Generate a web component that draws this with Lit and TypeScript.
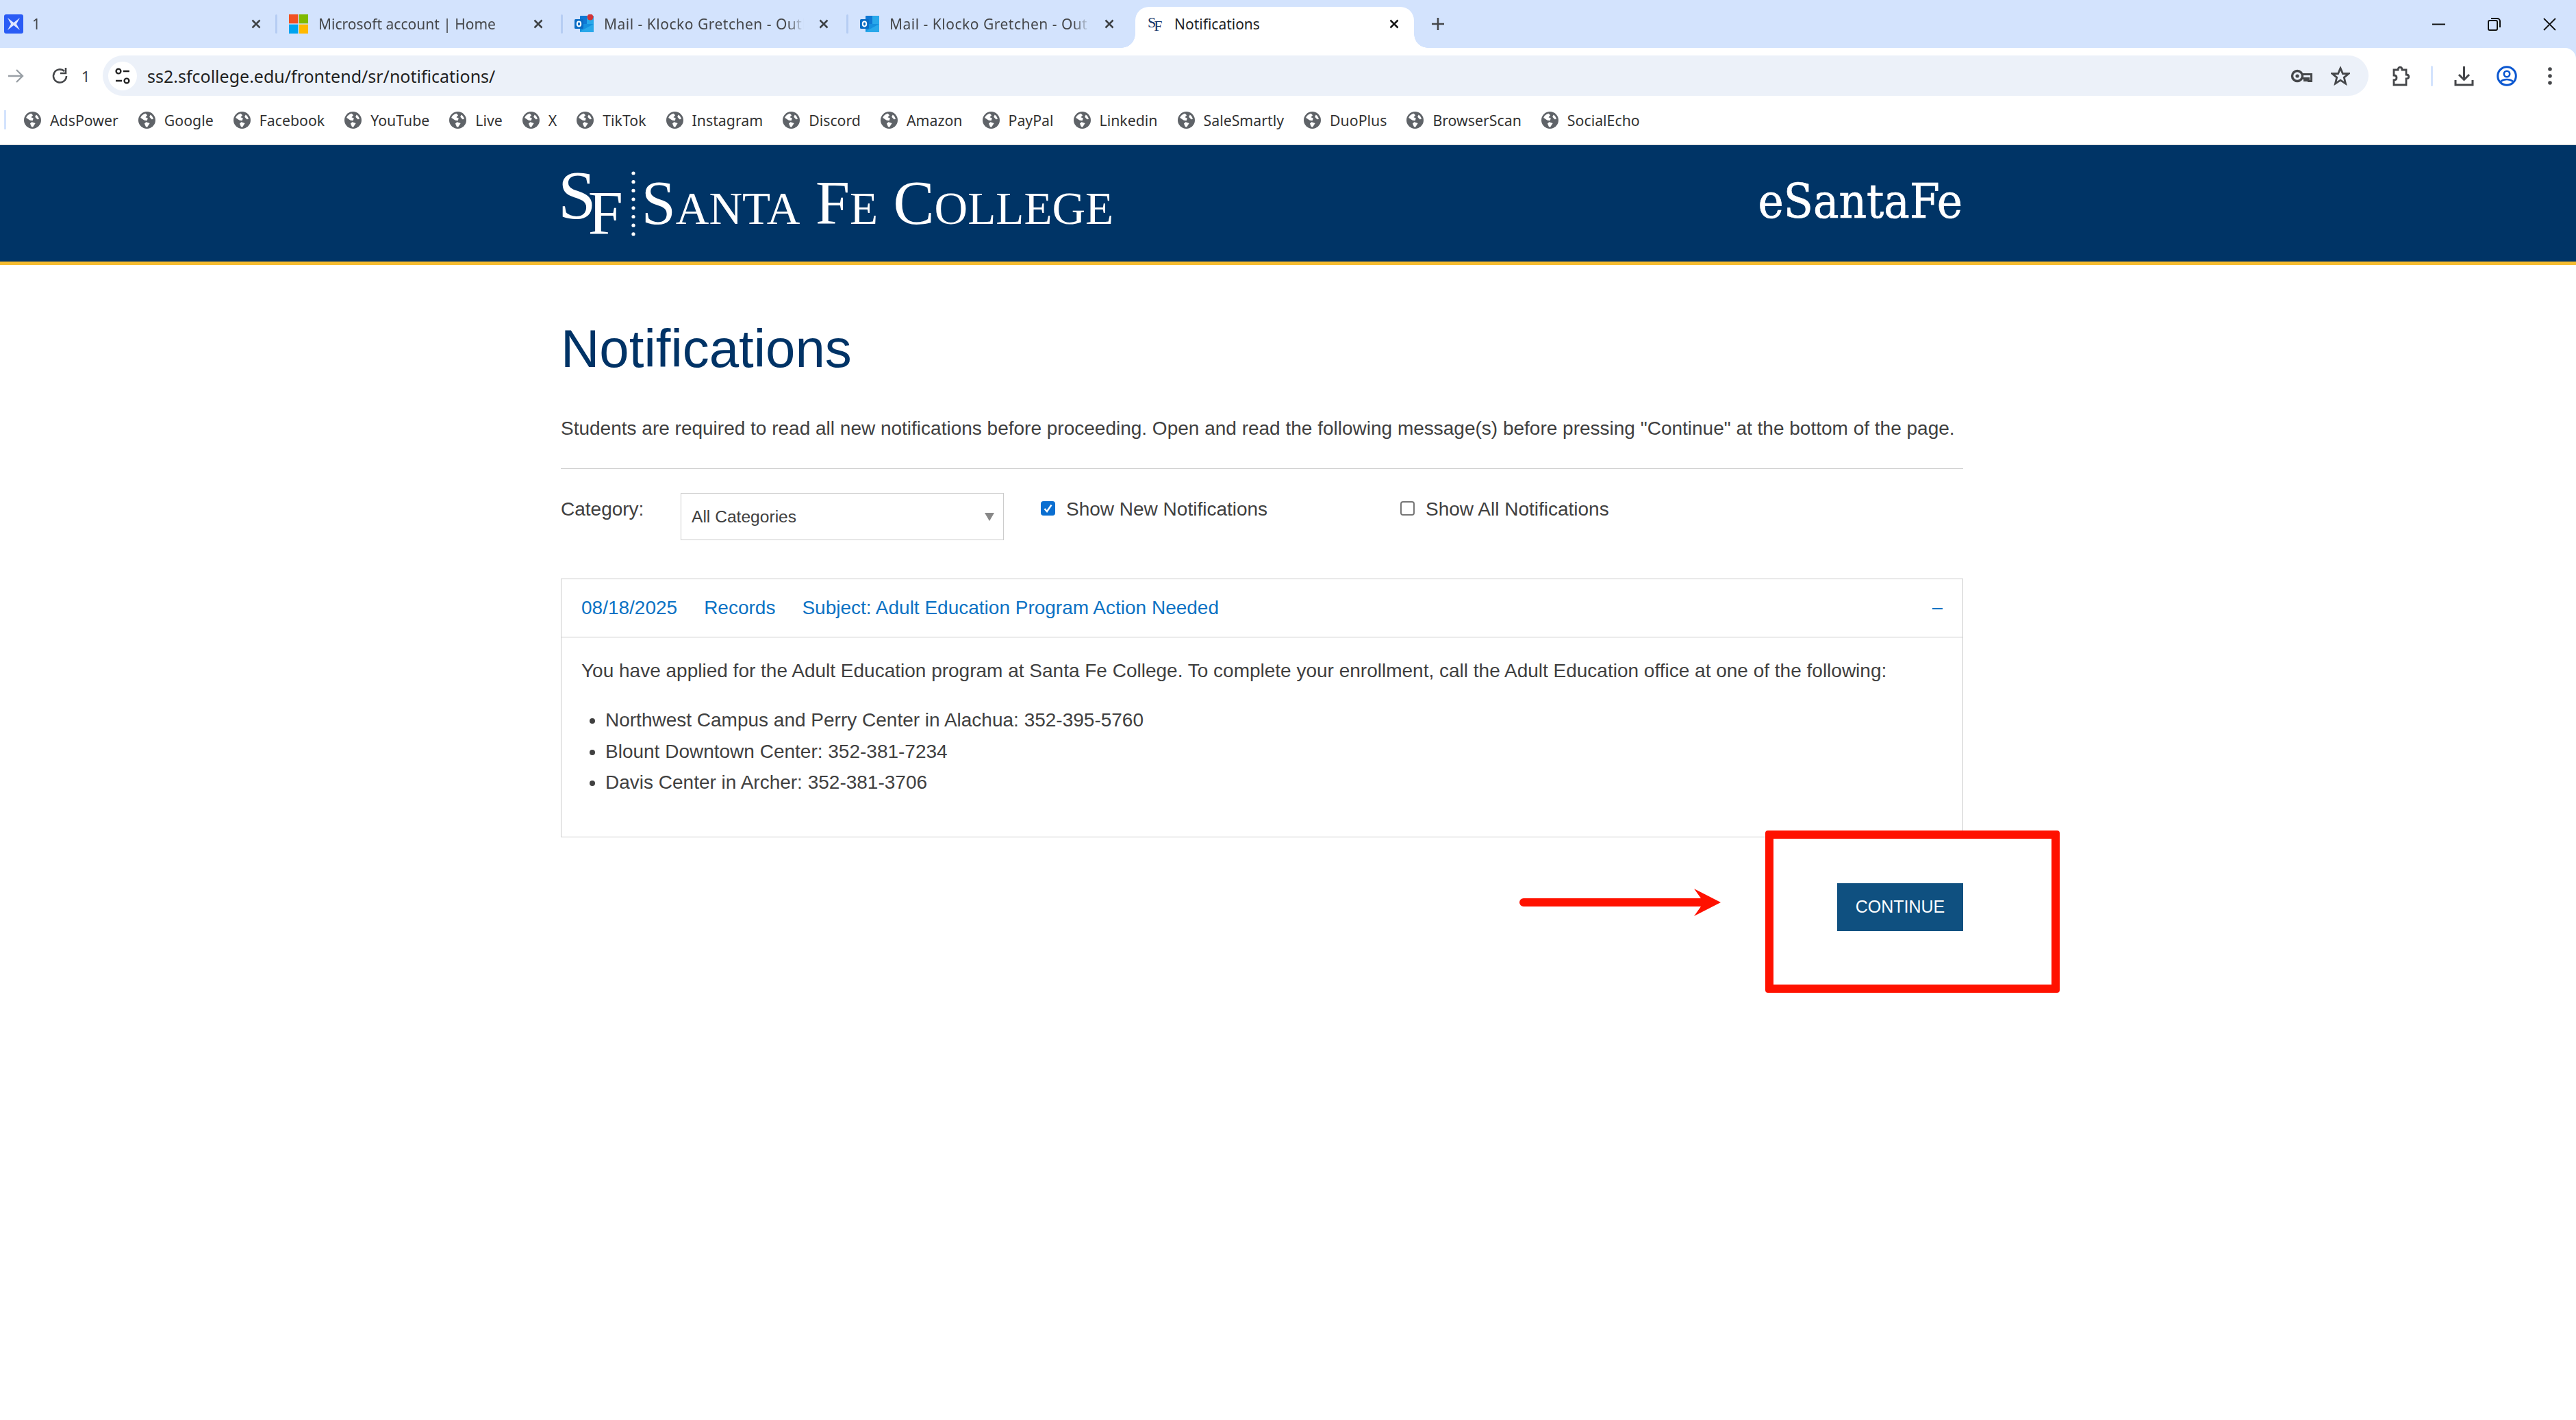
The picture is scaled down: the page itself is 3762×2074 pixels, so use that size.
import { LitElement, html, css, svg } from "lit";
import { customElement } from "lit/decorators.js";

const bookmarks = ["AdsPower","Google","Facebook","YouTube","Live","X","TikTok","Instagram","Discord","Amazon","PayPal","Linkedin","SaleSmartly","DuoPlus","BrowserScan","SocialEcho"];

const globe = html`<svg class="globe" viewBox="0 0 24 24"><circle cx="12" cy="12" r="12" fill="#5f6368"/><path fill="#fff" d="M10 2.600C6.800 3.400 4.200 5.600 3 8.600l5.500 3.600 3.600.4 1.200-3.200-3.200-1.600L12.600 5 10 2.600zM11 14.600l-2.400 2.200 2 4.600c.6.1 1.400.2 2 .1l3.400-5.200-5-1.700zM17 4.400l-1.400 3 3 3.400 2.400-.2c-.4-2.400-1.900-4.800-4-6.200z"/></svg>`;
const closeX = html`<svg class="x" viewBox="0 0 14 14"><path d="M1.500 1.500l11 11M12.500 1.500l-11 11" stroke="#3c4043" stroke-width="2.500" fill="none"/></svg>`;
const outlook = (badge: boolean) => html`<svg class="fav" viewBox="0 0 28 28"><path d="M9 2h18a1 1 0 0 1 1 1v11H8V3a1 1 0 0 1 1-1z" fill="#0f78d4"/><path d="M18 2h9a1 1 0 0 1 1 1v11H18z" fill="#28a8ea"/><path d="M8 14h20v11a1 1 0 0 1-1 1H9a1 1 0 0 1-1-1z" fill="#1490df"/><path d="M8 25l20-11v11a1 1 0 0 1-1 1H9z" fill="#28a8ea"/><rect x="0" y="7" width="13" height="14" rx="1.500" fill="#0a6cc4"/><ellipse cx="6.500" cy="14" rx="2.700" ry="3.400" fill="none" stroke="#fff" stroke-width="2"/>${badge ? svg`<circle cx="23" cy="4" r="4.500" fill="#d13438"/>` : ""}</svg>`;
const msLogo = html`<svg class="fav" viewBox="0 0 28 28"><rect width="13.300" height="13.300" fill="#f25022"/><rect x="14.700" width="13.300" height="13.300" fill="#7fba00"/><rect y="14.700" width="13.300" height="13.300" fill="#00a4ef"/><rect x="14.700" y="14.700" width="13.300" height="13.300" fill="#ffb900"/></svg>`;
const ads = html`<svg class="fav" viewBox="0 0 28 28"><rect width="28" height="28" rx="3" fill="#2a5cf5"/><path d="M5 5l9 7 9-7-5 9 5 9-9-7-9 7 5-9z" fill="#dfe8ff"/></svg>`;

const tabs = [
  { icon: ads, title: "1", cls: "first" },
  { icon: msLogo, title: "Microsoft account | Home", cls: "" },
  { icon: outlook(true), title: "Mail - Klocko Gretchen - Outlook", cls: "mail" },
  { icon: outlook(false), title: "Mail - Klocko Gretchen - Outlook", cls: "mail" },
];

@customElement("app-root")
export class AppRoot extends LitElement {
  static styles = css`
    :host { display: block; min-height: 100vh; background: #fff; font-family: "Liberation Sans", Arial, sans-serif; color: #404040; overflow: hidden; }
    .frame { position: relative; }
    .chrome { background: #d3e3fd; }
    .strip { height: 70px; display: flex; font-family: "Noto Sans", sans-serif; font-size: 21px; color: #45474a; }
    .tab { width: 417px; height: 70px; box-sizing: border-box; padding: 21px 0 0 20px; display: flex; align-items: flex-start; position: relative; flex: none; }
    .tab:not(.first)::before { content: ""; position: absolute; left: 0; top: 21px; width: 3px; height: 28px; border-radius: 2px; background: #b6cdf3; }
    .tab.first { width: 402px; padding-left: 6px; }
    .fav { width: 28px; height: 28px; flex: none; }
    .title { margin-left: 15px; width: 292px; line-height: 28px; white-space: nowrap; overflow: hidden; flex: none; -webkit-mask-image: linear-gradient(90deg, #000 92%, transparent); mask-image: linear-gradient(90deg, #000 92%, transparent); }
    .mail .title { letter-spacing: .5px; }
    .x { width: 14px; height: 14px; flex: none; margin: 7px 0 0 22px; }
    .tab.first .title { width: 306px; margin-left: 13px; }
    .tab.first .x { margin-left: 14px; }
    .active { width: 407px; height: 60px; margin: 10px 0 0 5px; background: #fff; border-radius: 20px 20px 0 0; box-sizing: border-box; padding: 11px 0 0 18px; display: flex; align-items: flex-start; color: #1f1f1f; flex: none; position: relative; }
    .active::before, .active::after { content: ""; position: absolute; bottom: 0; width: 20px; height: 20px; }
    .active::before { left: -20px; background: radial-gradient(circle at 0 0, transparent 19.500px, #fff 20px); }
    .active::after { right: -20px; background: radial-gradient(circle at 100% 0, transparent 19.500px, #fff 20px); }
    .sf { font-family: "Liberation Serif", serif; color: #17376b; width: 20px; font-size: 22px; line-height: 28px; flex: none; display: flex; margin-top: -2px; }
    .sf span:first-child { letter-spacing: -3px; }
    .sf span + span { margin-top: 5px; }
    .active .title { margin-left: 19px; width: 300px; -webkit-mask-image: none; mask-image: none; }
    .active .x { margin-left: 14px; }
    .active .x path { stroke: #111; }
    .plus { width: 22px; height: 22px; margin: 24px 0 0 24px; flex: none; }
    .winctl { margin-left: auto; display: flex; align-items: flex-start; gap: 62px; padding: 26px 29px 0 0; }
    .winctl svg { width: 19px; height: 19px; display: block; }

    .toolbar { height: 70px; box-sizing: border-box; padding-top: 11px; display: flex; align-items: center; background: #fff; border-radius: 0 16px 0 0; }
    .toolbar svg { display: block; flex: none; }
    .back { width: 24px; height: 24px; margin-left: 11px; }
    .reload { width: 26px; height: 26px; margin-left: 40px; }
    .one { font-family: "Noto Sans", sans-serif; font-size: 22px; width: 24px; margin-left: 18px; color: #3c4043; }
    .omni { margin-left: 7px; width: 3309px; height: 59px; border-radius: 30px; background: #ecf1f9; display: flex; align-items: center; flex: none; box-sizing: border-box; padding-left: 8px; }
    .tune { width: 42px; height: 42px; border-radius: 50%; background: #fff; display: flex; align-items: center; justify-content: center; flex: none; }
    .tune svg { width: 24px; height: 26px; }
    .url { font-family: "Noto Sans", sans-serif; font-size: 25px; color: #1f1f1f; margin-left: 15px; flex: 1; }
    .key { width: 32px; height: 20px; }
    .star { width: 28px; height: 28px; margin: 0 27px 0 27px; }
    .tools { display: flex; align-items: center; }
    .ext { width: 28px; height: 30px; margin-left: 33px; }
    .vsep { width: 3px; height: 30px; background: #d3e3fd; margin: 0 31px 0 30px; border-radius: 2px; }
    .dl { width: 29px; height: 30px; }
    .prof { width: 30px; height: 30px; margin-left: 33px; }
    .dots { width: 6px; height: 26px; margin-left: 45px; }

    .bookmarks { height: 72px; box-sizing: border-box; background: #fff; border-bottom: 2px solid #e6e6e6; display: flex; align-items: center; padding-left: 6px; font-family: "Noto Sans", sans-serif; font-size: 21.300px; color: #333; }
    .bsep { width: 3px; height: 28px; background: #d3e3fd; margin-right: 26px; }
    .bm { display: flex; align-items: center; gap: 13px; margin-right: 29px; }
    .globe { width: 25px; height: 25px; flex: none; }

    .hero { height: 175px; box-sizing: border-box; background: #003466; border-bottom: 5px solid #f6bc30; padding: 0 896px 0 815px; display: flex; justify-content: space-between; }
    .logo { display: flex; color: #fff; font-family: "Liberation Serif", serif; align-items: flex-start; }
    .mark-s { font-size: 100px; line-height: 100px; margin-top: 23px; letter-spacing: -12px; }
    .mark-f { font-size: 92px; line-height: 92px; margin: 53px 0 0; }
    .dotcol { width: 8px; height: 96px; margin: 37px 8px 0 11px; flex: none; }
    .name { font-size: 90px; line-height: 100px; margin-top: 35px; white-space: nowrap; }
    .name small { font-size: 67.300px; }
    .portal { font-family: "DejaVu Serif Condensed", "DejaVu Serif", serif; font-size: 70px; line-height: 80px; color: #fff; margin-top: 42px; -webkit-text-stroke: .7px #fff; }

    main { width: 2048px; margin-left: 819px; }
    h1 { font-weight: 400; font-size: 78px; line-height: 90px; color: #003366; margin: 77px 0 0; }
    .intro { font-size: 28px; line-height: 40px; margin: 52px 0 0; white-space: nowrap; }
    .rule { border-top: 1px solid #ccc; margin-top: 38px; }
    .filters { display: flex; align-items: flex-start; margin-top: 35px; }
    .lbl { font-size: 28px; line-height: 40px; margin-top: 4px; width: 175px; flex: none; }
    .select { width: 472px; height: 69px; box-sizing: border-box; border: 1px solid #ccc; display: flex; align-items: center; justify-content: space-between; padding: 1px 13px 0 15px; font-size: 24.600px; color: #404040; flex: none; }
    .select i { border-left: 7px solid transparent; border-right: 7px solid transparent; border-top: 12px solid #888; }
    .check { display: flex; align-items: flex-start; font-size: 28px; line-height: 40px; margin-top: 4px; }
    .check i { width: 21px; height: 21px; margin: 8px 16px 0 0; box-sizing: border-box; border-radius: 4px; display: block; flex: none; }
    .check i.on { background: #0b6fd1; display: flex; align-items: center; justify-content: center; }
    .check i.on svg { width: 15px; height: 15px; }
    .check i.off { border: 2px solid #767676; background: #fff; }
    .check.a { margin-left: 54px; width: 525px; flex: none; }
    .acc { margin-top: 56px; border: 1px solid #ccc; }
    .acc-h { height: 85px; box-sizing: border-box; border-bottom: 1px solid #ccc; display: flex; align-items: center; padding: 0 29px; color: #0b72c4; font-size: 28px; }
    .acc-h span { margin-right: 39px; }
    .acc-h .minus { margin: 2px 0 0 auto; width: 15px; height: 2px; background: #0b72c4; }
    .acc-b { padding: 29px 29px 56px; font-size: 28px; line-height: 40px; }
    .acc-b p { margin: 0; white-space: nowrap; }
    .acc-b ul { margin: 29px 0 0; padding: 0 0 0 35px; line-height: 45.600px; }
    .actions { display: flex; justify-content: flex-end; margin-top: 67px; }
    .btn { width: 184px; height: 70px; background: #0f5080; color: #fff; border: none; font: 400 25px "Liberation Sans", sans-serif; padding: 0; }

    .note-box { position: absolute; left: 2578px; top: 1213px; width: 430px; height: 237px; box-sizing: border-box; border: 12px solid #ff1100; border-radius: 4px; }
    .note-arrow { position: absolute; left: 2219px; top: 1296px; width: 296px; height: 44px; }
  `;

  render() {
    return html`<div class="frame">
      <div class="chrome">
        <div class="strip">
          ${tabs.map((t) => html`<div class="tab ${t.cls}">
            ${t.icon}<div class="title">${t.title}</div>${closeX}
          </div>`)}
          <div class="active">
            <div class="sf"><span>S</span><span>F</span></div>
            <div class="title">Notifications</div>${closeX}
          </div>
          <svg class="plus" viewBox="0 0 22 22"><path d="M11 2v18M2 11h18" stroke="#45474a" stroke-width="2.600"/></svg>
          <div class="winctl">
            <svg viewBox="0 0 19 19"><path d="M0 9.500h19" stroke="#111" stroke-width="2"/></svg>
            <svg viewBox="0 0 19 19"><rect x="1" y="4" width="13" height="14" rx="2" fill="none" stroke="#111" stroke-width="2"/><path d="M5 1h9a4 4 0 0 1 4 4v9" fill="none" stroke="#111" stroke-width="2"/></svg>
            <svg viewBox="0 0 19 19"><path d="M1 1l17 17M18 1L1 18" stroke="#111" stroke-width="1.800"/></svg>
          </div>
        </div>
        <div class="toolbar">
          <svg class="back" viewBox="0 0 24 24"><path d="M1 12h21M13 3l9 9-9 9" fill="none" stroke="#9aa0a6" stroke-width="2.400"/></svg>
          <svg class="reload" viewBox="0 0 26 26"><path d="M22 13a9.500 9.500 0 1 1-3-7" fill="none" stroke="#45474a" stroke-width="2.600"/><path d="M21 1v8h-8" fill="none" stroke="#45474a" stroke-width="2.600"/></svg>
          <div class="one">1</div>
          <div class="omni">
            <div class="tune"><svg viewBox="0 0 24 26"><circle cx="6" cy="6" r="3.400" fill="none" stroke="#222" stroke-width="2.400"/><path d="M13 6h9M2 20h9" stroke="#222" stroke-width="2.400"/><circle cx="18" cy="20" r="3.400" fill="none" stroke="#222" stroke-width="2.400"/></svg></div>
            <div class="url">ss2.sfcollege.edu/frontend/sr/notifications/</div>
            <svg class="key" viewBox="0 0 32 20"><circle cx="10" cy="10" r="7.500" fill="none" stroke="#45474a" stroke-width="3.400"/><circle cx="10" cy="10" r="2.600" fill="#45474a"/><path d="M17 7.500h13.500v10h-4v-4h-3v3h-3v-3h-3" fill="none" stroke="#45474a" stroke-width="3"/></svg>
            <svg class="star" viewBox="0 0 28 28"><path d="M14 2.500l3.400 8h8.600l-6.700 5.600 2.200 9-7.500-4.900-7.500 4.900 2.200-9L2 10.500h8.600z" fill="none" stroke="#45474a" stroke-width="2.800"/></svg>
          </div>
          <div class="tools">
            <svg class="ext" viewBox="0 0 28 30"><path d="M4 6h6c0-5 6-5 6 0h6v7c5 0 5 6 0 6v9H4v-7c3 0 4-2 4-3.500S7 14 4 14z" fill="none" stroke="#45474a" stroke-width="2.800"/></svg>
            <div class="vsep"></div>
            <svg class="dl" viewBox="0 0 29 30"><path d="M14.500 1v19M7 13l7.500 7.500L22 13" fill="none" stroke="#45474a" stroke-width="3"/><path d="M2 21v7h25v-7" fill="none" stroke="#45474a" stroke-width="3"/></svg>
            <svg class="prof" viewBox="0 0 30 30"><circle cx="15" cy="15" r="13.300" fill="none" stroke="#0b57d0" stroke-width="3"/><circle cx="15" cy="12" r="4.200" fill="none" stroke="#0b57d0" stroke-width="2.600"/><path d="M6 23c5-4 13-4 18 0" fill="none" stroke="#0b57d0" stroke-width="2.600"/></svg>
            <svg class="dots" viewBox="0 0 6 26"><circle cx="3" cy="3" r="2.800" fill="#45474a"/><circle cx="3" cy="13" r="2.800" fill="#45474a"/><circle cx="3" cy="23" r="2.800" fill="#45474a"/></svg>
          </div>
        </div>
        <div class="bookmarks">
          <div class="bsep"></div>
          ${bookmarks.map((b) => html`<div class="bm">${globe}<span>${b}</span></div>`)}
        </div>
      </div>
      <header class="hero">
        <div class="logo">
          <span class="mark-s">S</span><span class="mark-f">F</span>
          <svg class="dotcol" viewBox="0 0 8 96">${[0,1,2,3,4,5,6,7].map((i) => svg`<circle cx="4" cy=${4 + i * 12.7} r="2.600" fill="#fff"/>`)}</svg>
          <div class="name">S<small>ANTA</small> F<small>E</small> C<small>OLLEGE</small></div>
        </div>
        <div class="portal">eSantaFe</div>
      </header>
      <main>
        <h1>Notifications</h1>
        <p class="intro">Students are required to read all new notifications before proceeding. Open and read the following message(s) before pressing "Continue" at the bottom of the page.</p>
        <div class="rule"></div>
        <div class="filters">
          <div class="lbl">Category:</div>
          <div class="select"><span>All Categories</span><i></i></div>
          <div class="check a"><i class="on"><svg viewBox="0 0 15 15"><path d="M2.500 8l3.500 4 6.500-9.500" fill="none" stroke="#fff" stroke-width="2.400"/></svg></i>Show New Notifications</div>
          <div class="check"><i class="off"></i>Show All Notifications</div>
        </div>
        <section class="acc">
          <div class="acc-h"><span>08/18/2025</span><span>Records</span><span>Subject: Adult Education Program Action Needed</span><div class="minus"></div></div>
          <div class="acc-b">
            <p>You have applied for the Adult Education program at Santa Fe College. To complete your enrollment, call the Adult Education office at one of the following:</p>
            <ul>
              <li>Northwest Campus and Perry Center in Alachua: 352-395-5760</li>
              <li>Blount Downtown Center: 352-381-7234</li>
              <li>Davis Center in Archer: 352-381-3706</li>
            </ul>
          </div>
        </section>
        <div class="actions"><button class="btn">CONTINUE</button></div>
      </main>
      <div class="note-box"></div>
      <svg class="note-arrow" viewBox="0 0 296 44"><path d="M6 16h259l-10-14 39 20-39 20 10-14H6a6 6 0 0 1 0-12z" fill="#ff1100"/></svg>
    </div>`;
  }
}
